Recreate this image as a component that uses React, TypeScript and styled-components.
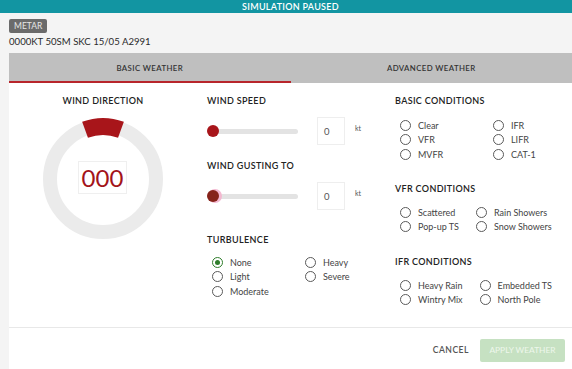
import React from 'react'
import styled, { createGlobalStyle } from 'styled-components'

const GlobalStyle = createGlobalStyle`
  html, body {
    margin: 0;
    padding: 0;
    background: #f4f4f4;
    font-family: Lato, "Open Sans", sans-serif;
    color: #333;
  }
  * {
    box-sizing: border-box;
  }
`

const Page = styled.div`
  display: flex;
  flex-direction: column;
  height: 100vh;
`

const TopBar = styled.div`
  height: 13px;
  line-height: 13px;
  padding-left: 9px;
  background: #1295a2;
  color: #fff;
  text-align: center;
  font-size: 9px;
  font-weight: 600;
  letter-spacing: 0.3px;
`

const MetarBlock = styled.div`
  display: flex;
  flex-direction: column;
  align-items: flex-start;
  padding: 6px 9px 0;
`

const Badge = styled.div`
  height: 14px;
  line-height: 14px;
  padding: 0 5px;
  border-radius: 2px;
  background: #6b6b6b;
  color: #e6e6e6;
  font-size: 8.5px;
`

const MetarText = styled.div`
  margin-top: 3px;
  line-height: 12px;
  font-size: 9.6px;
  color: #2a2a2a;
`

const Panel = styled.div`
  flex: 1;
  margin: 5px 0 0 9px;
  background: #fff;
  display: flex;
  flex-direction: column;
`

const Tabs = styled.div`
  display: flex;
  background: #bfbfbf;
`

const Tab = styled.div<{ $active?: boolean }>`
  flex: 1;
  height: 30px;
  padding-top: 1px;
  display: flex;
  align-items: center;
  justify-content: center;
  border-bottom: 2px solid ${(p) => (p.$active ? '#b8252b' : 'transparent')};
  font-size: 7.8px;
  font-weight: 600;
  letter-spacing: 0.4px;
  color: #333;
`

const Body = styled.div`
  flex: 1;
  display: grid;
  grid-template-columns: 188px 188px 1fr;
  padding-top: 12px;
`

const Column = styled.div<{ $center?: boolean }>`
  display: flex;
  flex-direction: column;
  align-items: ${(p) => (p.$center ? 'center' : 'flex-start')};
  padding-left: ${(p) => (p.$center ? '0' : '10px')};
`

const Title = styled.div<{ $space?: number }>`
  margin-top: ${(p) => p.$space ?? 0}px;
  font-size: 9px;
  line-height: 11px;
  font-weight: 600;
  letter-spacing: 0.35px;
  color: #222;
`

const Dial = styled.div`
  margin-top: 11px;
  display: grid;
  place-items: center;
  & > * {
    grid-area: 1 / 1;
  }
`

const DialValue = styled.div`
  width: 49px;
  height: 33px;
  margin: -3px 0 0 -1px;
  border: 1px solid #efefef;
  background: #fff;
  display: flex;
  align-items: center;
  justify-content: center;
  font-size: 24px;
  color: #a3141a;
`

const SliderRow = styled.div`
  margin-top: 11px;
  height: 28px;
  display: flex;
  align-items: center;
`

const Slider = styled.div`
  position: relative;
  width: 91px;
  height: 12px;
  &::before {
    content: '';
    position: absolute;
    left: 6px;
    right: 0;
    top: 4px;
    height: 5px;
    border-radius: 3px;
    background: #e3e3e3;
  }
`

const Thumb = styled.div<{ $focused?: boolean }>`
  position: absolute;
  top: 0;
  width: 12px;
  height: 12px;
  border-radius: 50%;
  background: ${(p) => (p.$focused ? '#86231a' : '#a8151a')};
  box-shadow: ${(p) => (p.$focused ? '2px 0 0 1px #f3b8d0' : 'none')};
`

const NumberBox = styled.div`
  margin-left: 19px;
  width: 28px;
  height: 28px;
  border: 1px solid #eeeeee;
  background: #fff;
  padding-left: 6px;
  display: flex;
  align-items: center;
  font-size: 9.5px;
  color: #555;
`

const Unit = styled.span`
  margin: 0 0 6px 10px;
  font-size: 7px;
  color: #555;
`

const RadioGrid = styled.div<{ $fixed?: boolean; $space?: number }>`
  margin-top: ${(p) => p.$space ?? 11}px;
  display: grid;
  grid-template-columns: ${(p) => (p.$fixed ? '93px 93px' : 'auto auto')};
  grid-auto-flow: ${(p) => (p.$fixed ? 'column' : 'row')};
  grid-template-rows: ${(p) => (p.$fixed ? 'repeat(3, 14.6px)' : 'repeat(2, 14.6px)')};
  column-gap: ${(p) => (p.$fixed ? 0 : 17)}px;
  padding-left: 5px;
`

const RadioItem = styled.div`
  display: flex;
  align-items: center;
  gap: 7px;
  font-size: 9px;
  color: #444;
  white-space: nowrap;
`

const RadioCircle = styled.span<{ $checked?: boolean }>`
  width: 11px;
  height: 11px;
  border-radius: 50%;
  border: ${(p) => (p.$checked ? '1.5px solid #2e7d2a' : '1px solid #5a5a5a')};
  display: flex;
  align-items: center;
  justify-content: center;
  flex-shrink: 0;
  &::after {
    content: '';
    width: 5px;
    height: 5px;
    border-radius: 50%;
    background: ${(p) => (p.$checked ? '#2e7d2a' : 'transparent')};
  }
`

const Footer = styled.div`
  height: 42px;
  border-top: 1px solid #e8e8e8;
  display: flex;
  align-items: center;
  justify-content: flex-end;
  padding: 3px 7px 0 0;
  gap: 11px;
`

const CancelButton = styled.div`
  font-size: 8.6px;
  font-weight: 600;
  letter-spacing: 0.5px;
  color: #555;
`

const ApplyButton = styled.div`
  width: 85px;
  height: 23px;
  border-radius: 2px;
  background: #c6e1c2;
  color: #eef7ec;
  font-size: 8.4px;
  display: flex;
  align-items: center;
  justify-content: center;
`

type RadioProps = { label: string; checked?: boolean }

const Radio = ({ label, checked }: RadioProps) => (
  <RadioItem>
    <RadioCircle $checked={checked} />
    {label}
  </RadioItem>
)

const arcPath = (cx: number, cy: number, r1: number, r2: number, deg: number) => {
  const a = (deg * Math.PI) / 180
  const pt = (r: number, s: number) => [cx + s * r * Math.sin(a), cy - r * Math.cos(a)]
  const [ox1, oy1] = pt(r2, -1)
  const [ox2, oy2] = pt(r2, 1)
  const [ix2, iy2] = pt(r1, 1)
  const [ix1, iy1] = pt(r1, -1)
  return `M${ox1} ${oy1} A${r2} ${r2} 0 0 1 ${ox2} ${oy2} L${ix2} ${iy2} A${r1} ${r1} 0 0 0 ${ix1} ${iy1} Z`
}

const WindDial = () => (
  <Dial>
    <svg width="124" height="124" viewBox="0 0 124 124">
      <circle cx="62" cy="62" r="53" fill="none" stroke="#ebebeb" strokeWidth="14" />
      <path d={arcPath(62, 62, 44, 61, 20)} fill="#a8151a" />
    </svg>
    <DialValue>000</DialValue>
  </Dial>
)

type SpeedProps = { focused?: boolean }

const SpeedControl = ({ focused }: SpeedProps) => (
  <SliderRow>
    <Slider>
      <Thumb $focused={focused} style={{ left: 0 }} />
    </Slider>
    <NumberBox>0</NumberBox>
    <Unit>kt</Unit>
  </SliderRow>
)

export default function App() {
  return (
    <Page>
      <GlobalStyle />
      <TopBar>SIMULATION PAUSED</TopBar>
      <MetarBlock>
        <Badge>METAR</Badge>
        <MetarText>0000KT 50SM SKC 15/05 A2991</MetarText>
      </MetarBlock>
      <Panel>
        <Tabs>
          <Tab $active>BASIC WEATHER</Tab>
          <Tab>ADVANCED WEATHER</Tab>
        </Tabs>
        <Body>
          <Column $center>
            <Title>WIND DIRECTION</Title>
            <WindDial />
          </Column>
          <Column>
            <Title>WIND SPEED</Title>
            <SpeedControl />
            <Title $space={15}>WIND GUSTING TO</Title>
            <SpeedControl focused />
            <Title $space={24}>TURBULENCE</Title>
            <RadioGrid $fixed $space={10}>
              <Radio label="None" checked />
              <Radio label="Light" />
              <Radio label="Moderate" />
              <Radio label="Heavy" />
              <Radio label="Severe" />
            </RadioGrid>
          </Column>
          <Column>
            <Title>BASIC CONDITIONS</Title>
            <RadioGrid $fixed $space={12}>
              <Radio label="Clear" />
              <Radio label="VFR" />
              <Radio label="MVFR" />
              <Radio label="IFR" />
              <Radio label="LIFR" />
              <Radio label="CAT-1" />
            </RadioGrid>
            <Title $space={21}>VFR CONDITIONS</Title>
            <RadioGrid>
              <Radio label="Scattered" />
              <Radio label="Rain Showers" />
              <Radio label="Pop-up TS" />
              <Radio label="Snow Showers" />
            </RadioGrid>
            <Title $space={22}>IFR CONDITIONS</Title>
            <RadioGrid>
              <Radio label="Heavy Rain" />
              <Radio label="Embedded TS" />
              <Radio label="Wintry Mix" />
              <Radio label="North Pole" />
            </RadioGrid>
          </Column>
        </Body>
        <Footer>
          <CancelButton>CANCEL</CancelButton>
          <ApplyButton>APPLY WEATHER</ApplyButton>
        </Footer>
      </Panel>
    </Page>
  )
}
